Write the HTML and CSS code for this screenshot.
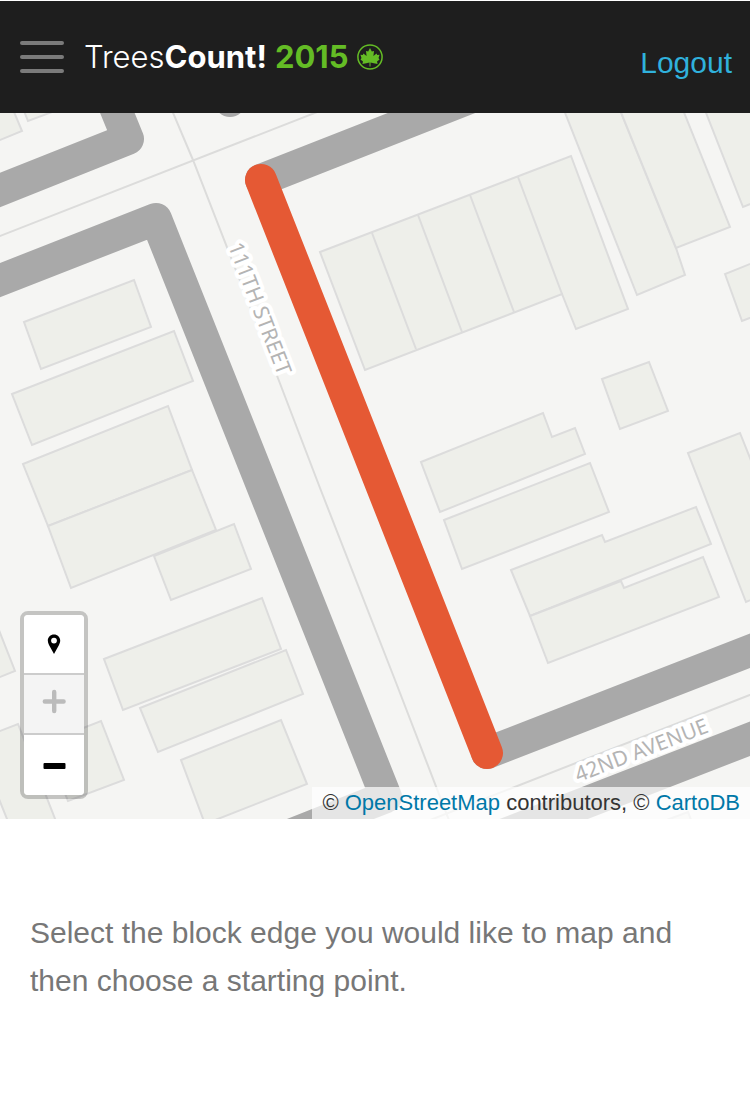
FILE: index.html
```html
<!DOCTYPE html>
<html lang="en">
<head>
<meta charset="utf-8">
<meta name="viewport" content="width=device-width, initial-scale=1">
<title>TreesCount! 2015</title>
<link rel="stylesheet" href="styles.css">
</head>
<body>
<header class="topbar">
  <button class="menu" type="button" aria-label="Menu">
    <span class="menu-bar"></span><span class="menu-bar"></span><span class="menu-bar"></span>
  </button>
  <a class="brand" href="#">
    <span class="brand-name">Trees<b>Count!</b></span>
    <b class="brand-year">2015</b>
    <svg class="brand-leaf" viewBox="0 0 26 26" aria-hidden="true">
      <circle cx="13" cy="13" r="12.1" fill="none" stroke="currentColor" stroke-width="1.5"/>
      <path fill="currentColor" d="M13 4L14.800 7.600L17 7L16.400 12L19.600 9.500L20.200 11L22.600 10.800L21.500 14L22.500 15.500L20 17.500L20.600 20L16.800 19.300L13.500 18.600V22.500H12.500V18.600L9.200 19.300L5.400 20L6 17.500L3.500 15.500L4.500 14L3.400 10.800L5.800 11L6.400 9.500L9.600 12L9 7L11.200 7.600Z"/>
    </svg>
  </a>
  <a class="logout" href="#">Logout</a>
</header>

<main>
  <section class="map" aria-label="Map">
    <svg class="map-canvas" viewBox="0 113 750 706" role="img" aria-label="Street blocks around 111th Street and 42nd Avenue">
      <g class="buildings">
        <path d="M-5 98L9 100L22 131L-5 142Z"/>
        <path d="M20 101L28 121L60 109L56 100Z"/>
        <path d="M24 322L134 280L151 327L41 369Z"/>
        <path d="M12 394L174 331L193 381L32 445Z"/>
        <path d="M23 464L168 406L192 470L48 526Z"/>
        <path d="M48 526L192 470L216 530L71 588Z"/>
        <path d="M154 556L234 524L251 569L171 600Z"/>
        <path d="M104 659L262 598L281 649L123 710Z"/>
        <path d="M140 708L286 650L303 694L158 752Z"/>
        <path d="M181 760L281 720L307 784L205 824Z"/>
        <path d="M-5 620L15 671L-5 679Z"/>
        <path d="M-5 733L18 724L59 829L11 829L-5 789Z"/>
        <path d="M45 743L101 721L124 780L68 801Z"/>
        <path d="M320 252L571 156L628 309L576 329L562 294L365 370Z"/>
        <path d="M372 233L416 349M418 215L462 332M470 195L514 312M518 177L562 294"/>
        <path d="M560 100L637 295L685 275L676 248L616 100Z"/>
        <path d="M616 100L676 248L730 227L679 100Z"/>
        <path d="M701 100L743 207L760 200V100Z"/>
        <path d="M725 274L742 321L760 314V260Z"/>
        <path d="M602 379L649 362L668 411L620 429Z"/>
        <path d="M421 462L543 413L552 437L575 428L585 454L440 512Z"/>
        <path d="M444 520L590 463L609 512L462 569Z"/>
        <path d="M511 570L602 535L605 542L696 507L711 544L530 616Z"/>
        <path d="M530 616L621 581L624 588L703 557L719 597L548 663Z"/>
        <path d="M688 453L740 433L760 483V596L746 602Z"/>
        <path d="M640 830L688 812L695 830Z"/>
      </g>
      <path class="road" d="M-5 238L330 107M171 108L193 160L276 373L320 488L395 680L452 828M420 824L760 691"/>
      <g class="edges">
        <path d="M-20 198L128 139L110 95"/>
        <path d="M-20 288L156 219L386 797L290 835"/>
        <path d="M230 90V101"/>
        <path d="M261 180L490 90"/>
        <path d="M487 753L770 643"/>
        <path d="M500 836L770 731"/>
      </g>
      <path class="edge-selected" d="M261 180L487 753"/>
      <g class="street-name">
        <text transform="translate(253 311) rotate(69)">111TH STREET</text>
        <text transform="translate(644 757) rotate(-21)">42ND AVENUE</text>
      </g>
    </svg>

    <div class="controls">
      <button class="control" type="button" aria-label="Find my location">
        <svg viewBox="0 0 32 32" aria-hidden="true"><path fill-rule="evenodd" d="M16 6.500c-3.500 0-6.200 2.600-6.200 6.100 0 1.600.5 3 1.200 4.300L16 26l5-9.100c.7-1.300 1.200-2.700 1.200-4.300C22.200 9.100 19.500 6.500 16 6.500zm0 3.200a2.900 2.900 0 1 1 0 5.800a2.900 2.900 0 1 1 0-5.800z"/></svg>
      </button>
      <button class="control" type="button" aria-label="Zoom in" disabled>
        <svg viewBox="0 0 32 32" aria-hidden="true"><path fill="none" stroke="currentColor" stroke-width="4.400" stroke-linecap="round" d="M6.800 13.500h18.800M16.200 4v19"/></svg>
      </button>
      <button class="control" type="button" aria-label="Zoom out">
        <svg viewBox="0 0 32 32" aria-hidden="true"><rect x="5.500" y="14" width="22" height="6" rx="1"/></svg>
      </button>
    </div>

    <p class="attribution">© <a href="#">OpenStreetMap</a> contributors, © <a href="#">CartoDB</a></p>
  </section>

  <p class="hint">Select the block edge you would like to map and then choose a starting point.</p>
</main>
</body>
</html>
```
FILE: styles.css
```css
* {
  box-sizing: border-box;
}

body {
  margin: 0;
  background: #fff;
  color: #777;
  font-family: "Liberation Sans", Arial, sans-serif;
}

a {
  text-decoration: none;
}

.topbar {
  display: flex;
  align-items: center;
  min-height: 113px;
  padding: 0 18px 0 20px;
  border-top: 1px solid #fff;
  background: #1e1e1e;
}

.menu {
  display: grid;
  gap: 10px;
  width: 44px;
  padding: 0;
  border: 0;
  background: none;
}

.menu-bar {
  height: 4px;
  border-radius: 2px;
  background: #7b7b7b;
}

.brand {
  display: flex;
  align-items: center;
  gap: 8px;
  margin-left: 20px;
  color: #fff;
  font: 300 31px/40px Inter, sans-serif;
}

.brand b {
  font-weight: 700;
}

.brand-year,
.brand-leaf {
  color: #64bc25;
}

.brand-leaf {
  width: 26px;
  height: 26px;
}

.logout {
  margin-left: auto;
  padding-top: 12px;
  color: #30b1dc;
  font-size: 30px;
  line-height: 36px;
}

.map {
  position: relative;
  overflow: hidden;
  background: #f5f5f3;
}

.map-canvas {
  display: block;
  width: 100%;
}

.buildings {
  fill: #eeefea;
  stroke: #dcdcdc;
  stroke-width: 2;
}

.road {
  fill: none;
  stroke: #dcdcdb;
  stroke-width: 2;
}

.edges,
.edge-selected {
  fill: none;
  stroke: #a9a9a9;
  stroke-width: 32;
  stroke-linecap: round;
  stroke-linejoin: round;
}

.edge-selected {
  stroke: #e55934;
}

.street-name {
  fill: #b4b4b4;
  stroke: #fff;
  stroke-width: 8;
  stroke-linejoin: round;
  paint-order: stroke;
  font: 21px "Noto Sans", "Open Sans", sans-serif;
  text-anchor: middle;
}

.controls {
  position: absolute;
  bottom: 20px;
  left: 20px;
  display: grid;
  width: 68px;
  overflow: hidden;
  border: 4px solid rgba(0, 0, 0, 0.2);
  border-radius: 8px;
}

.control {
  display: grid;
  place-items: center;
  height: 60px;
  padding: 0;
  border: 0;
  border-bottom: 2px solid #ccc;
  background: #fff;
  color: #000;
}

.control:last-child {
  border-bottom: 0;
}

.control:disabled {
  background: #f4f4f4;
  color: #bbb;
}

.control svg {
  width: 32px;
  height: 32px;
}

.attribution {
  position: absolute;
  right: 0;
  bottom: 0;
  margin: 0;
  padding: 0 10px;
  background: rgba(255, 255, 255, 0.7);
  color: #333;
  font-size: 22px;
  line-height: 32px;
}

.attribution a {
  color: #0078a8;
}

.hint {
  margin: 0;
  padding: 90px 30px;
  font-size: 30px;
  line-height: 48px;
}
```
